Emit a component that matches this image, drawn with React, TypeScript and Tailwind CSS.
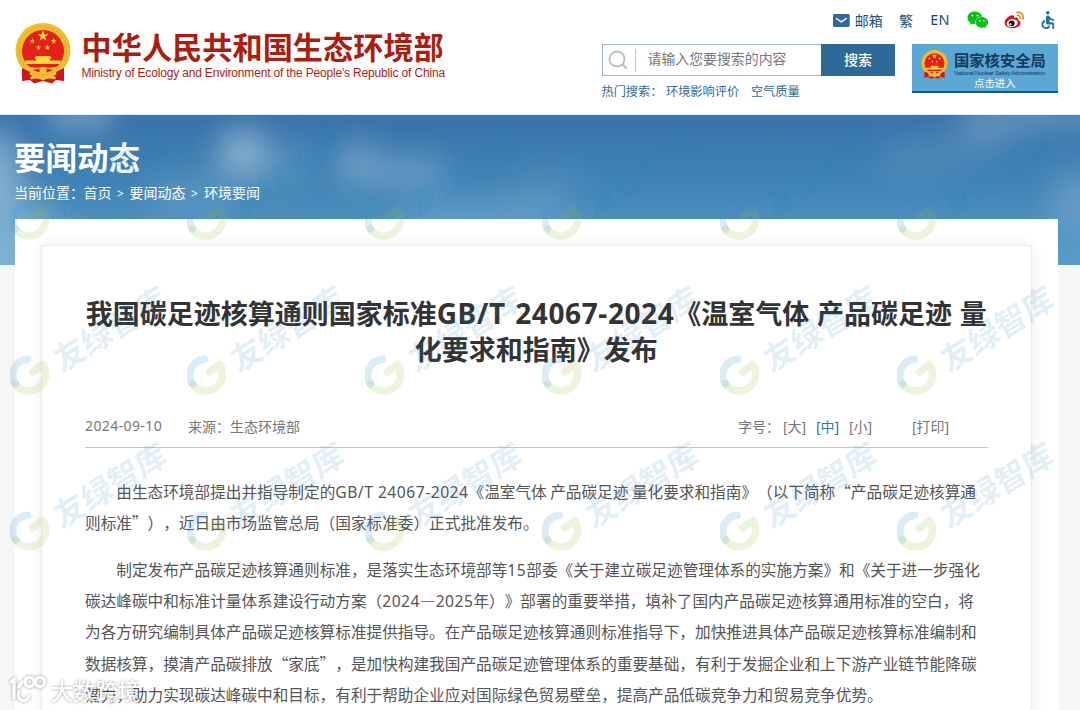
import * as React from 'react';
import { FaWeixin } from 'react-icons/fa';
import { MdAccessible } from 'react-icons/md';

const LATIN = /([A-Za-z0-9/\-.>[\]]+(?: [A-Za-z0-9/\-.]+)*)/;

// Latin runs get their own face, everything else stays in the CJK face
const Mixed = ({ text, latin = '' }: { text: string; latin?: string }) => (
  <>
    {text.split(LATIN).map((part, i) =>
      i % 2 ? (
        <span key={i} className={`leading-none font-['Noto_Sans','Noto_Sans_CJK_SC',sans-serif] ${latin}`}>{part}</span>
      ) : (
        part
      )
    )}
  </>
);

const STAR = '0,-1 .225,-.309 .951,-.309 .363,.118 .588,.809 0,.382 -.588,.809 -.363,.118 -.951,-.309 -.225,-.309';

const Emblem = ({ className }: { className: string }) => (
  <svg viewBox="0 0 56 61" className={className}>
    <path d="M8 43 L7 58 L15 57 L19 60.5 L28 58 L37 60.5 L41 57 L49 58 L48 43 Z" fill="#d3161d" />
    <circle cx="28" cy="27.5" r="27.5" fill="#f0bd2f" />
    <circle cx="28" cy="27.5" r="24" fill="none" stroke="#e2a926" strokeWidth="1" strokeDasharray="3 1.5" />
    <circle cx="28" cy="28" r="21" fill="#e61f1b" />
    <g fill="#ffd83a">
      <polygon points={STAR} transform="translate(28 13) scale(5.8)" />
      <polygon points={STAR} transform="translate(17.3 18) scale(3)" />
      <polygon points={STAR} transform="translate(38.7 18) scale(3)" />
      <polygon points={STAR} transform="translate(23.5 24.5) scale(3)" />
      <polygon points={STAR} transform="translate(32.5 24.5) scale(3)" />
      <path d="M21 33 h14 l2 2.5 h-2 v2 h10.5 v3.5 h-35 v-3.5 H21 v-2 h-2 Z" />
    </g>
    <path d="M9 42 Q18 46 28 44 Q38 46 47 42 L44 48 Q36 47 32 50 Q28 53 24 50 Q20 47 12 48 Z" fill="#f3c02f" />
    <path d="M18 47 Q28 44 38 47 Q28 52 18 47 Z" fill="#d3161d" />
    <circle cx="28" cy="47.5" r="3.5" fill="#f3c02f" />
    <path d="M7 45 L7 58 L13 56 L15 49 Z M49 45 L49 58 L43 56 L41 49 Z" fill="#cf141b" />
    <path d="M15 54 Q22 51 28 55 Q34 51 41 54 L40 56.5 Q33 54 28 57.5 Q23 54 16 56.5 Z" fill="#f3c02f" />
  </svg>
);

const Weibo = () => (
  <svg viewBox="0 0 21 18" className="h-[18px] w-[21px]">
    <path d="M8.2 4.2 C5 4.6 .6 8.4 .6 11.8 C.6 15.2 4.6 17.3 8.6 17.3 C13.6 17.3 16.8 14.6 16.8 12 C16.8 10.3 15.4 9.4 14.2 9.1 C14.9 6.9 13.6 5.7 10.3 7 C10.7 5.2 10 4 8.2 4.2 Z" fill="#d9101a" />
    <ellipse cx="8.3" cy="12.2" rx="5.7" ry="4" fill="#fff" transform="rotate(-8 8.3 12.2)" />
    <circle cx="7.8" cy="12.4" r="3" fill="#161616" />
    <circle cx="6.7" cy="13.3" r="1" fill="#fff" />
    <path d="M13.2 1.3 C17.2 .5 20.4 3.7 19.3 7.9" fill="none" stroke="#ee8a1d" strokeWidth="1.7" strokeLinecap="round" />
    <path d="M13.5 4.3 C15.5 3.9 17 5.3 16.5 7.2" fill="none" stroke="#ee8a1d" strokeWidth="1.4" strokeLinecap="round" />
  </svg>
);

// seated figure with the wheel drawn as an open ring
const Wheelchair = () => <MdAccessible className="ml-[12px] h-[22px] w-[22px] text-[#2470a4]" />;

const Header = () => (
  <header className="flex h-[115px] items-start border-b border-[#d6effc] bg-white pl-[15px]">
    <Emblem className="mt-[23px] h-[61px] w-[56px]" />
    <div className="mt-[28px] ml-[10.5px] w-[520px] whitespace-nowrap text-[#ab1d0e]">
      <div className="text-[30.2px] leading-9 font-bold">中华人民共和国生态环境部</div>
      <div className="mt-px font-['Liberation_Sans',sans-serif] text-[12px] leading-[17px] tracking-[-0.17px]">
        Ministry of Ecology and Environment of the People's Republic of China
      </div>
    </div>
    <div className="flex w-[457px] flex-col whitespace-nowrap">
      <div className="mt-[10px] flex h-5 items-center pl-[231.5px] text-[14px] text-[#174e7c]">
        <svg viewBox="0 0 17 13" className="h-[13px] w-[17px]">
          <rect width="17" height="13" rx="1.5" fill="#2e6a9b" />
          <path d="M3 4.2 L8.5 8 L14 4.2" fill="none" stroke="#fff" strokeWidth="1.5" />
        </svg>
        <span className="ml-[5px] w-[45px]">邮箱</span>
        <span className="w-[32px]">繁</span>
        <span className="w-[37px] font-['Noto_Sans',sans-serif] text-[14.5px]">EN</span>
        <FaWeixin className="mr-[16px] h-[20px] w-[22px] text-[#0abf16]" />
        <Weibo />
        <Wheelchair />
      </div>
      <div className="mt-[14px] flex">
        <div>
          <div className="flex h-8 w-[293.5px]">
            <div className="flex w-[219.5px] items-center border border-r-0 border-[#9fb8cb]">
              <svg viewBox="0 0 20 20" className="ml-[5px] h-5 w-5">
                <circle cx="9" cy="9" r="7.5" fill="none" stroke="#bdbdbd" strokeWidth="1.8" />
                <path d="M14.5 14.5 L18.5 18.5" stroke="#bdbdbd" strokeWidth="2.2" />
              </svg>
              <div className="ml-[7px] h-[23px] w-px bg-[#c4c4c4]" />
              <span className="mb-1 ml-[12px] text-[13.9px] text-[#777]">请输入您要搜索的内容</span>
            </div>
            <div className="flex flex-1 items-center justify-center bg-[#2e6a97] pb-[2px] text-[14px] font-medium text-white">搜索</div>
          </div>
          <div className="mt-[7px] flex text-[12.2px] leading-4 text-[#2e6a97]">
            <span className="w-[64.5px]">热门搜索：</span>
            <span className="w-[85px]">环境影响评价</span>
            <span>空气质量</span>
          </div>
        </div>
        <div className="ml-[17px] flex h-[49px] w-[146px] items-start border-b-2 border-[#1b5686] bg-[#5ba8d6]">
          <Emblem className="mt-[6px] ml-[9px] h-[29px] w-[27px]" />
          <div className="ml-[6px] w-[92px] text-[#143a5e]">
            <div className="mt-[5px] text-[15.3px] leading-5 font-bold">国家核安全局</div>
            <div className="mt-px font-['Liberation_Sans',sans-serif] text-[6px] leading-[6px] tracking-[-0.3px]">National Nuclear Safety Administration</div>
            <div className="ml-[20px] text-[10.4px] leading-[14px] text-white">点击进入</div>
          </div>
        </div>
      </div>
    </div>
  </header>
);

const clouds = [
  'left-[45px] top-[-18px] h-[34px] w-[70px] bg-white/25 blur-[12px]',
  'left-[-30px] top-[15px] h-[80px] w-[50px] bg-white/35 blur-[16px]',
  'left-[-60px] top-[80px] h-[90px] w-[120px] bg-white/25 blur-[20px]',
  'left-[220px] top-[12px] h-[48px] w-[46px] bg-white/30 blur-[14px]',
  'left-[210px] top-[26px] h-[44px] w-[100px] bg-white/15 blur-[18px]',
  'left-[335px] top-[22px] h-[30px] w-[45px] bg-white/15 blur-[14px]',
  'left-[335px] top-[44px] h-[24px] w-[110px] bg-white/25 blur-[15px]',
  'left-[150px] top-[64px] h-[30px] w-[80px] bg-white/15 blur-[16px]',
  'left-[400px] top-[84px] h-[40px] w-[150px] bg-white/15 blur-[20px]',
  'left-[520px] top-[55px] h-[50px] w-[60px] bg-white/10 blur-[20px]',
  'left-[880px] top-[20px] h-[30px] w-[130px] -rotate-12 bg-white/10 blur-[16px]',
  'left-[960px] top-[-18px] h-[34px] w-[150px] -rotate-6 bg-white/20 blur-[14px]',
  'left-[1050px] top-[55px] h-[60px] w-[60px] bg-white/20 blur-[18px]',
];

const Banner = () => (
  <div className="relative h-[149.5px] overflow-hidden bg-linear-to-b from-[#3873aa] via-[#4285b7] to-[#5b9cc9]">
    {clouds.map((cloud) => (
      <div key={cloud} className={`absolute rounded-full ${cloud}`} />
    ))}
    <div className="relative pl-[14px] whitespace-nowrap text-white">
      <h1 className="pt-[20.5px] text-[31.5px] leading-10 font-bold">要闻动态</h1>
      <div className="mt-[6.5px] flex text-[14px] leading-5">
        <span className="w-[69.5px]">当前位置：</span>
        <span className="w-[33.5px]">首页</span>
        <span className="w-[12.5px] pt-[2px] font-['Noto_Sans',sans-serif] text-[12px]">&gt;</span>
        <span className="w-[61.5px]">要闻动态</span>
        <span className="w-[13px] pt-[2px] font-['Noto_Sans',sans-serif] text-[12px]">&gt;</span>
        <span>环境要闻</span>
      </div>
    </div>
  </div>
);

const paragraphs = [
  [
    '由生态环境部提出并指导制定的GB/T 24067-2024《温室气体 产品碳足迹 量化要求和指南》（以下简称“产品碳足迹核算通',
    '则标准”），近日由市场监管总局（国家标准委）正式批准发布。',
  ],
  [
    '制定发布产品碳足迹核算通则标准，是落实生态环境部等15部委《关于建立碳足迹管理体系的实施方案》和《关于进一步强化',
    '碳达峰碳中和标准计量体系建设行动方案（2024—2025年）》部署的重要举措，填补了国内产品碳足迹核算通用标准的空白，将',
    '为各方研究编制具体产品碳足迹核算标准提供指导。在产品碳足迹核算通则标准指导下，加快推进具体产品碳足迹核算标准编制和',
    '数据核算，摸清产品碳排放“家底”，是加快构建我国产品碳足迹管理体系的重要基础，有利于发掘企业和上下游产业链节能降碳',
    '潜力，助力实现碳达峰碳中和目标，有利于帮助企业应对国际绿色贸易壁垒，提高产品低碳竞争力和贸易竞争优势。',
  ],
];

const Article = () => (
  <article className="h-[520px] border border-[#ececec] bg-white px-[43px] shadow-[0_0_12px_rgba(0,0,0,0.08)]">
    <h2 className="mt-[49px] h-[72px] text-center text-[27px] leading-9 font-bold whitespace-nowrap text-[#333] [word-spacing:1.6px]">
      <Mixed text="我国碳足迹核算通则国家标准GB/T 24067-2024《温室气体 产品碳足迹 量" latin="text-[28px] tracking-[0.6px]" />
      <br />
      化要求和指南》发布
    </h2>
    <div className="mt-[49px] flex h-[32px] border-b border-[#b7cad6] text-[14px] leading-5 whitespace-nowrap text-[#777]">
      <span className="w-[103px] font-['Noto_Sans',sans-serif] tracking-[0.4px]">2024-09-10</span>
      <span className="w-[42px]">来源：</span>
      <span className="w-[508px]">生态环境部</span>
      <span className="w-[45px]">字号：</span>
      <span className="w-[33px]"><Mixed text="[大]" /></span>
      <span className="w-[33px] text-[#2e74ad]"><Mixed text="[中]" /></span>
      <span className="w-[63px]"><Mixed text="[小]" /></span>
      <span><Mixed text="[打印]" /></span>
    </div>
    <div className="mt-[27.5px] flex flex-col gap-[15.7px] text-[15.65px] leading-[31.3px] whitespace-nowrap text-[#555]">
      {paragraphs.map((lines, i) => (
        <div key={i}>
          {lines.map((line, j) => (
            <div key={line} className={j === 0 ? 'h-[31.3px] pl-[31.3px]' : 'h-[31.3px]'}>
              <Mixed text={line} latin="tracking-[0.5px]" />
            </div>
          ))}
        </div>
      ))}
    </div>
  </article>
);

// one tile of the repeated brand mark: ring on the left, slanted name above it
const Mark = () => (
  <div className="relative h-[155.5px] w-[177.4px]">
    <svg viewBox="0 0 40 40" className="absolute top-[96px] left-[10px] h-10 w-10" fill="none" strokeLinecap="round">
      <path d="M5.5 29 A16 16 0 0 1 17.5 4.2" stroke="#3c97d0" strokeOpacity=".18" strokeWidth="7.5" />
      <path d="M5.5 29 A16 16 0 0 0 32.5 9.5 L22.5 17" stroke="#8dbb34" strokeOpacity=".17" strokeWidth="7.5" strokeLinejoin="round" />
    </svg>
    <div className="absolute top-[43px] left-[41px] w-[136px] origin-center -rotate-[32deg] skew-x-[-6deg] text-center text-[31.8px] leading-[50px] font-bold whitespace-nowrap text-[#1a84c6]/14">
      友绿智库
    </div>
  </div>
);

const Watermarks = () => (
  <div className="pointer-events-none absolute top-[103.5px] left-0 grid w-[1080px] grid-cols-[repeat(6,177.4px)] overflow-hidden">
    {[...Array(18)].map((_, i) => (
      <Mark key={i} />
    ))}
  </div>
);

const CornerBrand = () => (
  <div className="absolute top-[673px] left-[8px] flex items-center opacity-80 drop-shadow-[0_0_1.5px_rgba(0,0,0,0.5)]">
    <svg viewBox="0 0 40 30" className="h-[30px] w-10" fill="none" stroke="#fff" strokeWidth="3.2" strokeLinecap="round">
      <path d="M3 8 L6 5.5 V24" />
      <path d="M14 8 L10.5 13" />
      <path d="M11 18 A5.5 5.5 0 1 0 21 22" />
      <circle cx="21.5" cy="8" r="4.6" />
      <circle cx="32" cy="8" r="4.6" />
    </svg>
    <span className="ml-[3px] pt-[2px] text-[22.3px] leading-[30px] font-medium text-white">大数跨境</span>
  </div>
);

const App = () => (
  <div
    lang="zh-CN"
    className="relative h-[710px] w-[1080px] overflow-hidden bg-[#f6f6f6] font-['Noto_Sans_CJK_SC',sans-serif] [text-spacing-trim:space-all]"
  >
    <Header />
    <Banner />
    <main className="relative mr-[22px] ml-[15px] mt-[-45.5px] h-[500px] bg-white pt-[26px] pr-[26.5px] pl-[26px]">
      <Article />
    </main>
    <Watermarks />
    <CornerBrand />
  </div>
);

export default App;
